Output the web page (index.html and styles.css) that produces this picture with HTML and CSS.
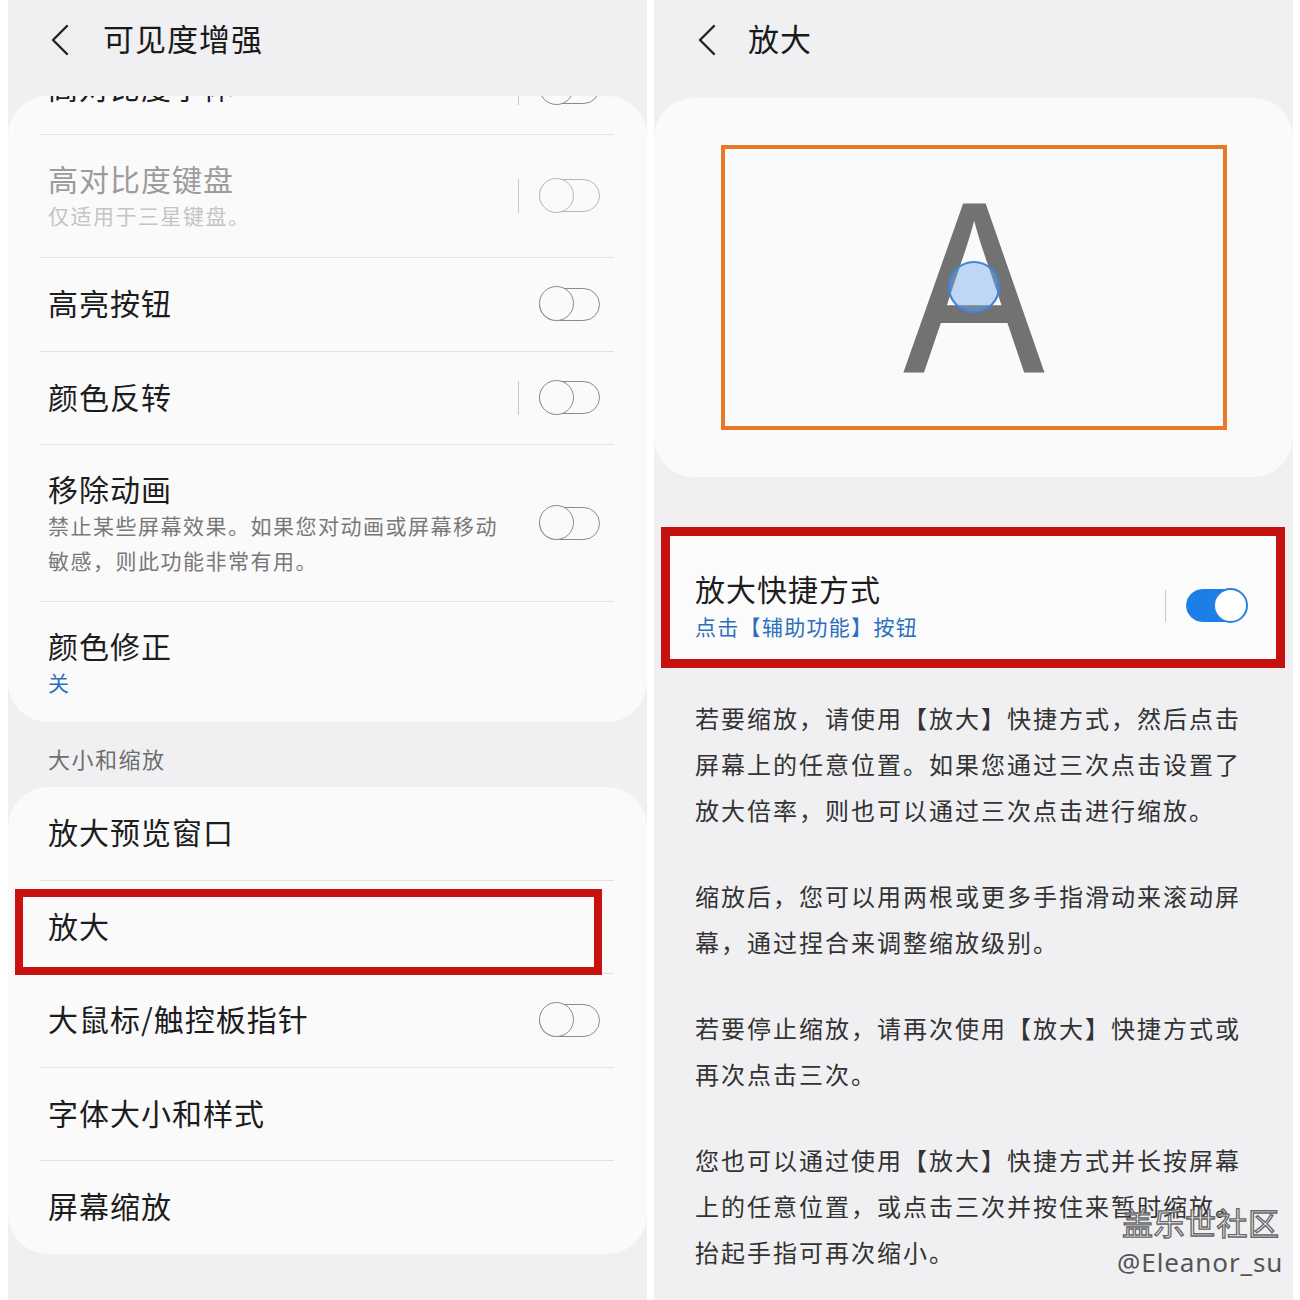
FILE: index.html
```html
<!DOCTYPE html>
<html lang="zh-CN">
<head>
<meta charset="utf-8">
<title>可见度增强 / 放大</title>
<link rel="stylesheet" href="styles.css">
</head>
<body>
<div class="screens">
  <section class="panel">
    <header class="bar">
      <svg class="back" width="20" height="32" viewBox="0 0 20 32"><polyline points="17,2 3,16 17,30" fill="none" stroke="#222" stroke-width="2.4" stroke-linecap="round" stroke-linejoin="round"/></svg>
      <h1 class="bar-title">可见度增强</h1>
    </header>

    <div class="card clip">
      <div class="row row-cut">
        <div class="row-text"><div class="title">高对比度字体</div></div>
        <span class="sep"></span><span class="toggle"></span>
      </div>
      <div class="row row-sub row-kb disabled">
        <div class="row-text"><div class="title">高对比度键盘</div><div class="sub">仅适用于三星键盘。</div></div>
        <span class="sep"></span><span class="toggle"></span>
      </div>
      <div class="row">
        <div class="row-text"><div class="title">高亮按钮</div></div>
        <span class="toggle"></span>
      </div>
      <div class="row">
        <div class="row-text"><div class="title">颜色反转</div></div>
        <span class="sep"></span><span class="toggle"></span>
      </div>
      <div class="row row-sub">
        <div class="row-text"><div class="title">移除动画</div><div class="sub">禁止某些屏幕效果。如果您对动画或屏幕移动<br>敏感，则此功能非常有用。</div></div>
        <span class="toggle"></span>
      </div>
      <div class="row row-sub row-end last">
        <div class="row-text"><div class="title">颜色修正</div><div class="sub blue">关</div></div>
      </div>
    </div>

    <div class="section-label">大小和缩放</div>

    <div class="card">
      <div class="row">
        <div class="row-text"><div class="title">放大预览窗口</div></div>
      </div>
      <div class="row marked">
        <div class="row-text"><div class="title">放大</div></div>
      </div>
      <div class="row">
        <div class="row-text"><div class="title">大鼠标/触控板指针</div></div>
        <span class="toggle"></span>
      </div>
      <div class="row">
        <div class="row-text"><div class="title">字体大小和样式</div></div>
      </div>
      <div class="row last">
        <div class="row-text"><div class="title">屏幕缩放</div></div>
      </div>
    </div>
  </section>

  <section class="panel">
    <header class="bar">
      <svg class="back" width="20" height="32" viewBox="0 0 20 32"><polyline points="17,2 3,16 17,30" fill="none" stroke="#222" stroke-width="2.4" stroke-linecap="round" stroke-linejoin="round"/></svg>
      <h1 class="bar-title">放大</h1>
    </header>

    <div class="card preview-card">
      <div class="preview-frame">
        <svg class="preview-art" width="498" height="277" viewBox="0 0 498 277">
          <text x="0" y="0" transform="translate(249,223) scale(0.865,1)" text-anchor="middle" font-family="Liberation Sans, Arial, sans-serif" font-size="246" fill="#727272">A</text>
          <circle cx="249" cy="138" r="25" fill="rgba(110,165,235,0.42)" stroke="#3f86d8" stroke-width="2.2"/>
        </svg>
      </div>
    </div>

    <div class="shortcut">
      <div class="row-text">
        <div class="title">放大快捷方式</div>
        <div class="sub blue">点击【辅助功能】按钮</div>
      </div>
      <span class="sep"></span><span class="toggle on"></span>
    </div>

    <div class="desc">
      <p>若要缩放，请使用【放大】快捷方式，然后点击<br>屏幕上的任意位置。如果您通过三次点击设置了<br>放大倍率，则也可以通过三次点击进行缩放。</p>
      <p>缩放后，您可以用两根或更多手指滑动来滚动屏<br>幕，通过捏合来调整缩放级别。</p>
      <p>若要停止缩放，请再次使用【放大】快捷方式或<br>再次点击三次。</p>
      <p>您也可以通过使用【放大】快捷方式并长按屏幕<br>上的任意位置，或点击三次并按住来暂时缩放。<br>抬起手指可再次缩小。</p>
    </div>
  </section>

  <div class="watermark">
    <div class="wm-brand">盖乐世社区</div>
    <div class="wm-user">@Eleanor_su</div>
  </div>
</div>
</body>
</html>
```

FILE: styles.css
```css
html, body {
  margin: 0;
  padding: 0;
  background: #ffffff;
}
body {
  font-family: "Noto Sans CJK SC", "Noto Sans", sans-serif;
  color: #1d1d1d;
}
.screens {
  position: relative;
  display: flex;
  gap: 7px;
  padding-left: 8px;
  width: 1300px;
  height: 1300px;
  box-sizing: border-box;
  overflow: hidden;
}
.panel {
  width: 639px;
  height: 1300px;
  background: #f0f0f2;
  display: flex;
  flex-direction: column;
  overflow: hidden;
}
.panel > * { flex: none; }
.bar {
  height: 96px;
  display: flex;
  align-items: flex-start;
  padding-left: 42px;
  box-sizing: border-box;
}
.back {
  margin-top: 24px;
  flex: none;
}
.bar-title {
  margin: 18px 0 0 33px;
  font-size: 31px;
  font-weight: 400;
  letter-spacing: 1px;
  line-height: 40px;
  color: #1a1a1a;
}
.panel:nth-child(2) .bar { padding-left: 43px; }
.panel:nth-child(2) .bar-title { margin-left: 31px; }

.card {
  background: #fafafb;
  border-radius: 40px;
  overflow: hidden;
}
.row {
  display: flex;
  align-items: center;
  min-height: 92.5px;
  padding: 0 46px 0 40px;
  margin: 0;
  position: relative;
  box-sizing: border-box;
}
.row::before {
  content: "";
  position: absolute;
  left: 32px;
  right: 33px;
  bottom: -1px;
  height: 1px;
  background: #e2e2e4;
}
.row + .row { margin-top: 1px; }
.row.last::before { display: none; }
.row-cut { margin-top: -54.5px; }
.row-sub {
  padding-top: 23px;
  padding-bottom: 23px;
}
.row-kb { padding-bottom: 24px; }
.row-end { padding-bottom: 22px; }
.row-text {
  flex: 1;
}
.title {
  font-size: 30px;
  letter-spacing: 1px;
  line-height: 40px;
}
.row:not(.row-sub) .title { margin-bottom: 4px; }
.sub {
  font-size: 21px;
  letter-spacing: 1.5px;
  line-height: 35px;
  color: #787878;
}
.sub.blue { color: #2a70bd; }
.disabled .title { color: #9c9c9c; }
.disabled .sub { color: #c4c4c4; }
.disabled .toggle, .disabled .toggle::after { border-color: #b6b6b6; }

.sep {
  width: 1px;
  height: 34px;
  background: #c8c8c8;
  margin-right: 20px;
  margin-left: -2px;
  flex: none;
}
.toggle {
  flex: none;
  width: 61px;
  height: 33px;
  margin-right: 1px;
  border: 1.5px solid #8a8a8a;
  border-radius: 17px;
  box-sizing: border-box;
  position: relative;
}
.toggle::after {
  content: "";
  position: absolute;
  left: -1.5px;
  top: -2.5px;
  width: 35px;
  height: 35px;
  border-radius: 50%;
  border: 1.5px solid #8a8a8a;
  box-sizing: border-box;
  background: #fafafb;
}
.toggle.on {
  background: #1c7fe8;
  border-color: #1c7fe8;
}
.toggle.on::after {
  left: auto;
  right: -2px;
  top: -2.5px;
  border: 2px solid #2b82dc;
  background: #ffffff;
}

.section-label {
  padding: 21px 0 14px 40px;
  font-size: 22px;
  letter-spacing: 1.5px;
  line-height: 30px;
  color: #6e6e6e;
}

.marked::after {
  content: "";
  position: absolute;
  left: 7px;
  top: 8px;
  width: 587px;
  height: 86px;
  border: 8px solid #c8120f;
  box-sizing: border-box;
}

.preview-card {
  margin-top: 2px;
  padding: 47px 0;
}
.preview-frame {
  width: 506px;
  height: 285px;
  margin: 0 auto;
  border: 4px solid #e87825;
  box-sizing: border-box;
  background: #fafafb;
}
.preview-art { display: block; }

.shortcut {
  margin: 50px 0 0 7px;
  width: 624px;
  height: 141px;
  border: 9px solid #c6120f;
  box-sizing: border-box;
  background: #fbfbfc;
  display: flex;
  align-items: center;
  padding: 22px 28px 6px 25px;
}
.shortcut .title { margin-bottom: 0; }
.shortcut .sub {
  letter-spacing: 1.3px;
  line-height: 36px;
}
.shortcut .sep {
  height: 32px;
  margin-right: 20px;
}

.desc {
  padding: 27px 40px 0 41px;
}
.desc p {
  margin: 0 0 40px 0;
  font-size: 24px;
  letter-spacing: 2px;
  line-height: 46px;
  color: #333333;
}

.watermark {
  position: absolute;
  left: 1117px;
  top: 1201px;
}
.wm-brand {
  font-size: 31px;
  line-height: 42px;
  letter-spacing: 0.5px;
  color: #f4f4f4;
  -webkit-text-stroke: 1.3px #666666;
  padding-left: 5px;
}
.wm-user {
  font-family: "Noto Sans", "DejaVu Sans", sans-serif;
  font-size: 26px;
  letter-spacing: 0.9px;
  line-height: 34px;
  margin-top: 2px;
  color: #555555;
}
```
